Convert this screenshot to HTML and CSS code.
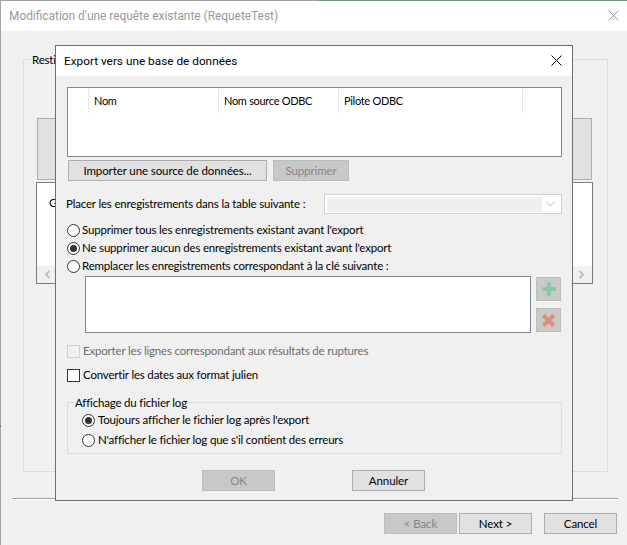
FILE: index.html
```html
<!DOCTYPE html>
<html lang="fr">
<head>
<meta charset="utf-8">
<title>Export vers une base de données</title>
<link rel="stylesheet" href="styles.css">
</head>
<body>
<div class="window">
  <header class="win-title">
    <span>Modification d'une requête existante (RequeteTest)</span>
    <svg class="close-back" width="11" height="11" viewBox="0 0 11 11"><path d="M.5.5l10 10M10.5.5l-10 10"/></svg>
  </header>
  <main class="win-body">
    <section class="outer-group">
      <span class="outer-legend">Resti</span>
      <div class="tab-strip"></div>
      <div class="back-panel">
        <div class="back-text">G</div>
        <div class="back-scroll">
          <svg class="arrow" width="7" height="9" viewBox="0 0 7 9"><path d="M5.5 1L2 4.5 5.5 8"/></svg>
          <svg class="arrow" width="7" height="9" viewBox="0 0 7 9"><path d="M1.5 1L5 4.5 1.5 8"/></svg>
        </div>
      </div>
    </section>
    <div class="win-rule"></div>
    <footer class="win-actions">
      <button class="btn btn-off">&lt; Back</button>
      <button class="btn">Next &gt;</button>
      <button class="btn btn-cancel">Cancel</button>
    </footer>
  </main>
</div>

<div class="dialog">
  <header class="dlg-title">
    <span>Export vers une base de données</span>
    <svg class="close-front" width="11" height="11" viewBox="0 0 11 11"><path d="M.5.5l10 10M10.5.5l-10 10"/></svg>
  </header>
  <div class="dlg-body">
    <div class="list">
      <div class="list-head">
        <span class="col col-0"></span>
        <span class="col col-1">Nom</span>
        <span class="col col-2">Nom source ODBC</span>
        <span class="col col-3">Pilote ODBC</span>
      </div>
    </div>
    <div class="list-actions">
      <button class="btn btn-import">Importer une source de données...</button>
      <button class="btn btn-off btn-delete">Supprimer</button>
    </div>
    <div class="table-row">
      <span>Placer les enregistrements dans la table suivante :</span>
      <div class="combo">
        <div class="combo-field"></div>
        <svg class="chevron" width="11" height="6" viewBox="0 0 11 6"><path d="M1 .5l4.5 4.5L10 .5"/></svg>
      </div>
    </div>
    <div class="options">
      <label class="opt"><span class="radio"></span>Supprimer tous les enregistrements existant avant l'export</label>
      <label class="opt"><span class="radio radio-on"></span>Ne supprimer aucun des enregistrements existant avant l'export</label>
      <label class="opt"><span class="radio"></span>Remplacer les enregistrements correspondant à la clé suivante :</label>
    </div>
    <div class="key-row">
      <div class="key-list"></div>
      <div class="key-tools">
        <button class="tool">
          <svg width="14" height="14" viewBox="0 0 14 14"><path class="plus" d="M5 0h4v5h5v4H9v5H5V9H0V5h5z"/></svg>
        </button>
        <button class="tool">
          <svg width="13" height="13" viewBox="0 0 14 14"><path class="cross" d="M3 0l4 4 4-4 3 3-4 4 4 4-3 3-4-4-4 4-3-3 4-4-4-4z"/></svg>
        </button>
      </div>
    </div>
    <label class="check check-off"><span class="box"></span>Exporter les lignes correspondant aux résultats de ruptures</label>
    <label class="check check-on"><span class="box"></span>Convertir les dates aux format julien</label>
    <section class="log-group">
      <span class="log-legend">Affichage du fichier log</span>
      <label class="opt opt-log"><span class="radio radio-on"></span>Toujours afficher le fichier log après l'export</label>
      <label class="opt opt-log"><span class="radio"></span>N'afficher le fichier log que s'il contient des erreurs</label>
    </section>
    <div class="dlg-actions">
      <button class="btn btn-off">OK</button>
      <button class="btn">Annuler</button>
    </div>
  </div>
</div>
</body>
</html>
```
FILE: styles.css
```css
* { box-sizing: border-box; }
html, body { margin: 0; padding: 0; }
body {
  width: 627px; height: 545px; overflow: hidden; position: relative;
  background: #f0f0f0; color: #000;
  font: 11.5px/16px Lato, sans-serif;
  letter-spacing: -0.18px;
}
.window {
  position: relative;
  width: 627px; height: 545px;
  display: flex; flex-direction: column;
  border-left: 1px solid #a3a3a3;
  border-top: 1px solid #a3a3a3;
}
.window::before {
  content: ""; position: absolute; left: 318px; right: 0; top: -1px; height: 1px;
  background: #6f8f74;
}
.window::after {
  content: ""; position: absolute; left: -1px; top: 424px; width: 1px; height: 2px;
  background: #777;
}
.win-title {
  height: 30px; background: #fff; color: #999;
  display: flex; align-items: center; justify-content: space-between;
  padding: 0 8px 1px 8px; flex: none;
  font-family: Roboto, sans-serif; font-size: 11.9px; letter-spacing: 0;
}
.close-back path { stroke: #999; fill: none; }
.close-front path { stroke: #000; fill: none; }
.win-body { flex: 1; display: flex; flex-direction: column; }
.outer-group {
  position: relative;
  margin: 28px 0 0 22px; width: 585px; height: 413px;
  border: 1px solid #dcdcdc;
  padding: 58px 14px 0 12px;
  flex: none;
}
.outer-legend {
  position: absolute; left: 7px; top: -8px;
  padding: 0 1px; background: #f0f0f0; line-height: 16px;
}
.tab-strip {
  height: 62px; margin: 0 1px 2px 1px;
  background: #e1e1e1; border: 1px solid #adadad;
}
.back-panel {
  height: 102px; background: #fff;
  border: 1px solid #7a7a7a;
  display: flex; flex-direction: column; justify-content: space-between;
}
.back-text { padding: 12px 0 0 12px; }
.back-scroll {
  height: 18px; background: #f0f0f0; border-top: 1px solid #fff;
  display: flex; justify-content: space-between; align-items: center;
  padding: 0 7px;
}
.arrow path { fill: none; stroke: #c0c0c0; stroke-width: 2; }
.win-rule {
  margin: 26px 9px 0 11px; height: 2px; flex: none;
  border-top: 1px solid #a0a0a0; background: #fff;
}
.win-actions {
  display: flex; gap: 2px; padding: 13px 9px 0 383px; flex: none;
}
.btn {
  width: 73px; height: 21px; padding: 0;
  background: #e1e1e1; border: 1px solid #adadad;
  font: inherit; color: #000; letter-spacing: -0.1px;
}
.btn-off { background: #c8c8c8; border-color: #bdbdbd; color: #858585; }
.btn-cancel { margin-left: 10px; }

.dialog {
  position: absolute; left: 55px; top: 45px;
  width: 518px; height: 456px;
  background: #f0f0f0;
  border: 1px solid #6e6e6e;
  display: flex; flex-direction: column;
}
.dlg-title {
  height: 30px; background: #fff; flex: none;
  display: flex; align-items: center; justify-content: space-between;
  padding: 0 10px 1px 8px;
  font-family: Roboto, sans-serif; font-size: 11.8px; letter-spacing: 0;
}
.dlg-body { flex: 1; padding: 11px 11px 0 11px; }
.list {
  width: 495px; height: 70px; background: #fff;
  border: 1px solid #828790; padding-top: 1px;
}
.list-head { display: flex; height: 24px; align-items: center; }
.col {
  height: 24px; line-height: 24px; padding-left: 5px;
  border-right: 1px solid #e5e5e5; flex: none;
  font-size: 11px; letter-spacing: -0.3px;
}
.col-0 { width: 21px; }
.col-1 { width: 130px; }
.col-2 { width: 120px; }
.col-3 { width: 184px; }
.list-actions { display: flex; gap: 6px; margin: 3px 0 0 1px; }
.btn-import { width: 199px; }
.btn-delete { width: 76px; }
.table-row {
  display: flex; align-items: center; justify-content: space-between;
  margin: 13px 0 0 -1px; height: 20px; width: 496px; white-space: nowrap;
}
.combo {
  width: 238px; height: 20px; background: #fff; flex: none;
  border: 1px solid #d0d0d0; padding: 2px;
  display: flex; align-items: center; justify-content: space-between;
}
.combo-field { width: 215px; height: 15px; background: #efefef; }
.chevron { margin-right: 3px; }
.chevron path { fill: none; stroke: #b5b5b5; }
.options { margin-top: 7px; }
.opt { display: flex; align-items: center; height: 18px; white-space: nowrap; }
.radio {
  width: 13px; height: 13px; border-radius: 50%; flex: none;
  background: #fff; border: 1px solid #333; margin-right: 2px;
  display: flex; align-items: center; justify-content: center;
}
.radio-on::after {
  content: ""; width: 7px; height: 7px; border-radius: 50%; background: #333;
}
.key-row { display: flex; gap: 5px; margin: 1px 0 0 18px; width: 477px; }
.key-list {
  width: 446px; height: 57px; background: #fff; border: 1px solid #7f8490;
}
.key-tools { display: flex; flex-direction: column; gap: 7px; padding-top: 1px; }
.tool {
  width: 25px; height: 24px; padding: 0;
  background: #c9c9c9; border: 1px solid #bdbdbd;
  display: flex; align-items: center; justify-content: center;
}
.plus { fill: #8ec6a8; }
.cross { fill: #d98e7d; }
.check { display: flex; align-items: center; height: 14px; white-space: nowrap; }
.box {
  width: 13px; height: 13px; flex: none; margin-right: 3px;
  background: #fff; border: 1px solid #333;
}
.check-off { margin-top: 11px; color: #6d6d6d; }
.check-off .box { background: #f0f0f0; border-color: #d0d0d0; }
.check-on { margin-top: 10px; }
.log-group {
  position: relative;
  margin: 20px 0 0; padding: 7px 0 0 14px;
  width: 495px; height: 52px;
  border: 1px solid #dcdcdc;
}
.log-legend {
  position: absolute; left: 6px; top: -7px; padding: 0 1px;
  line-height: 14px; background: #f0f0f0;
}
.opt-log { height: 20px; }
.opt-log .radio { margin-right: 3px; }
.dlg-actions { display: flex; gap: 77px; margin: 16px 0 0 135px; }
```
